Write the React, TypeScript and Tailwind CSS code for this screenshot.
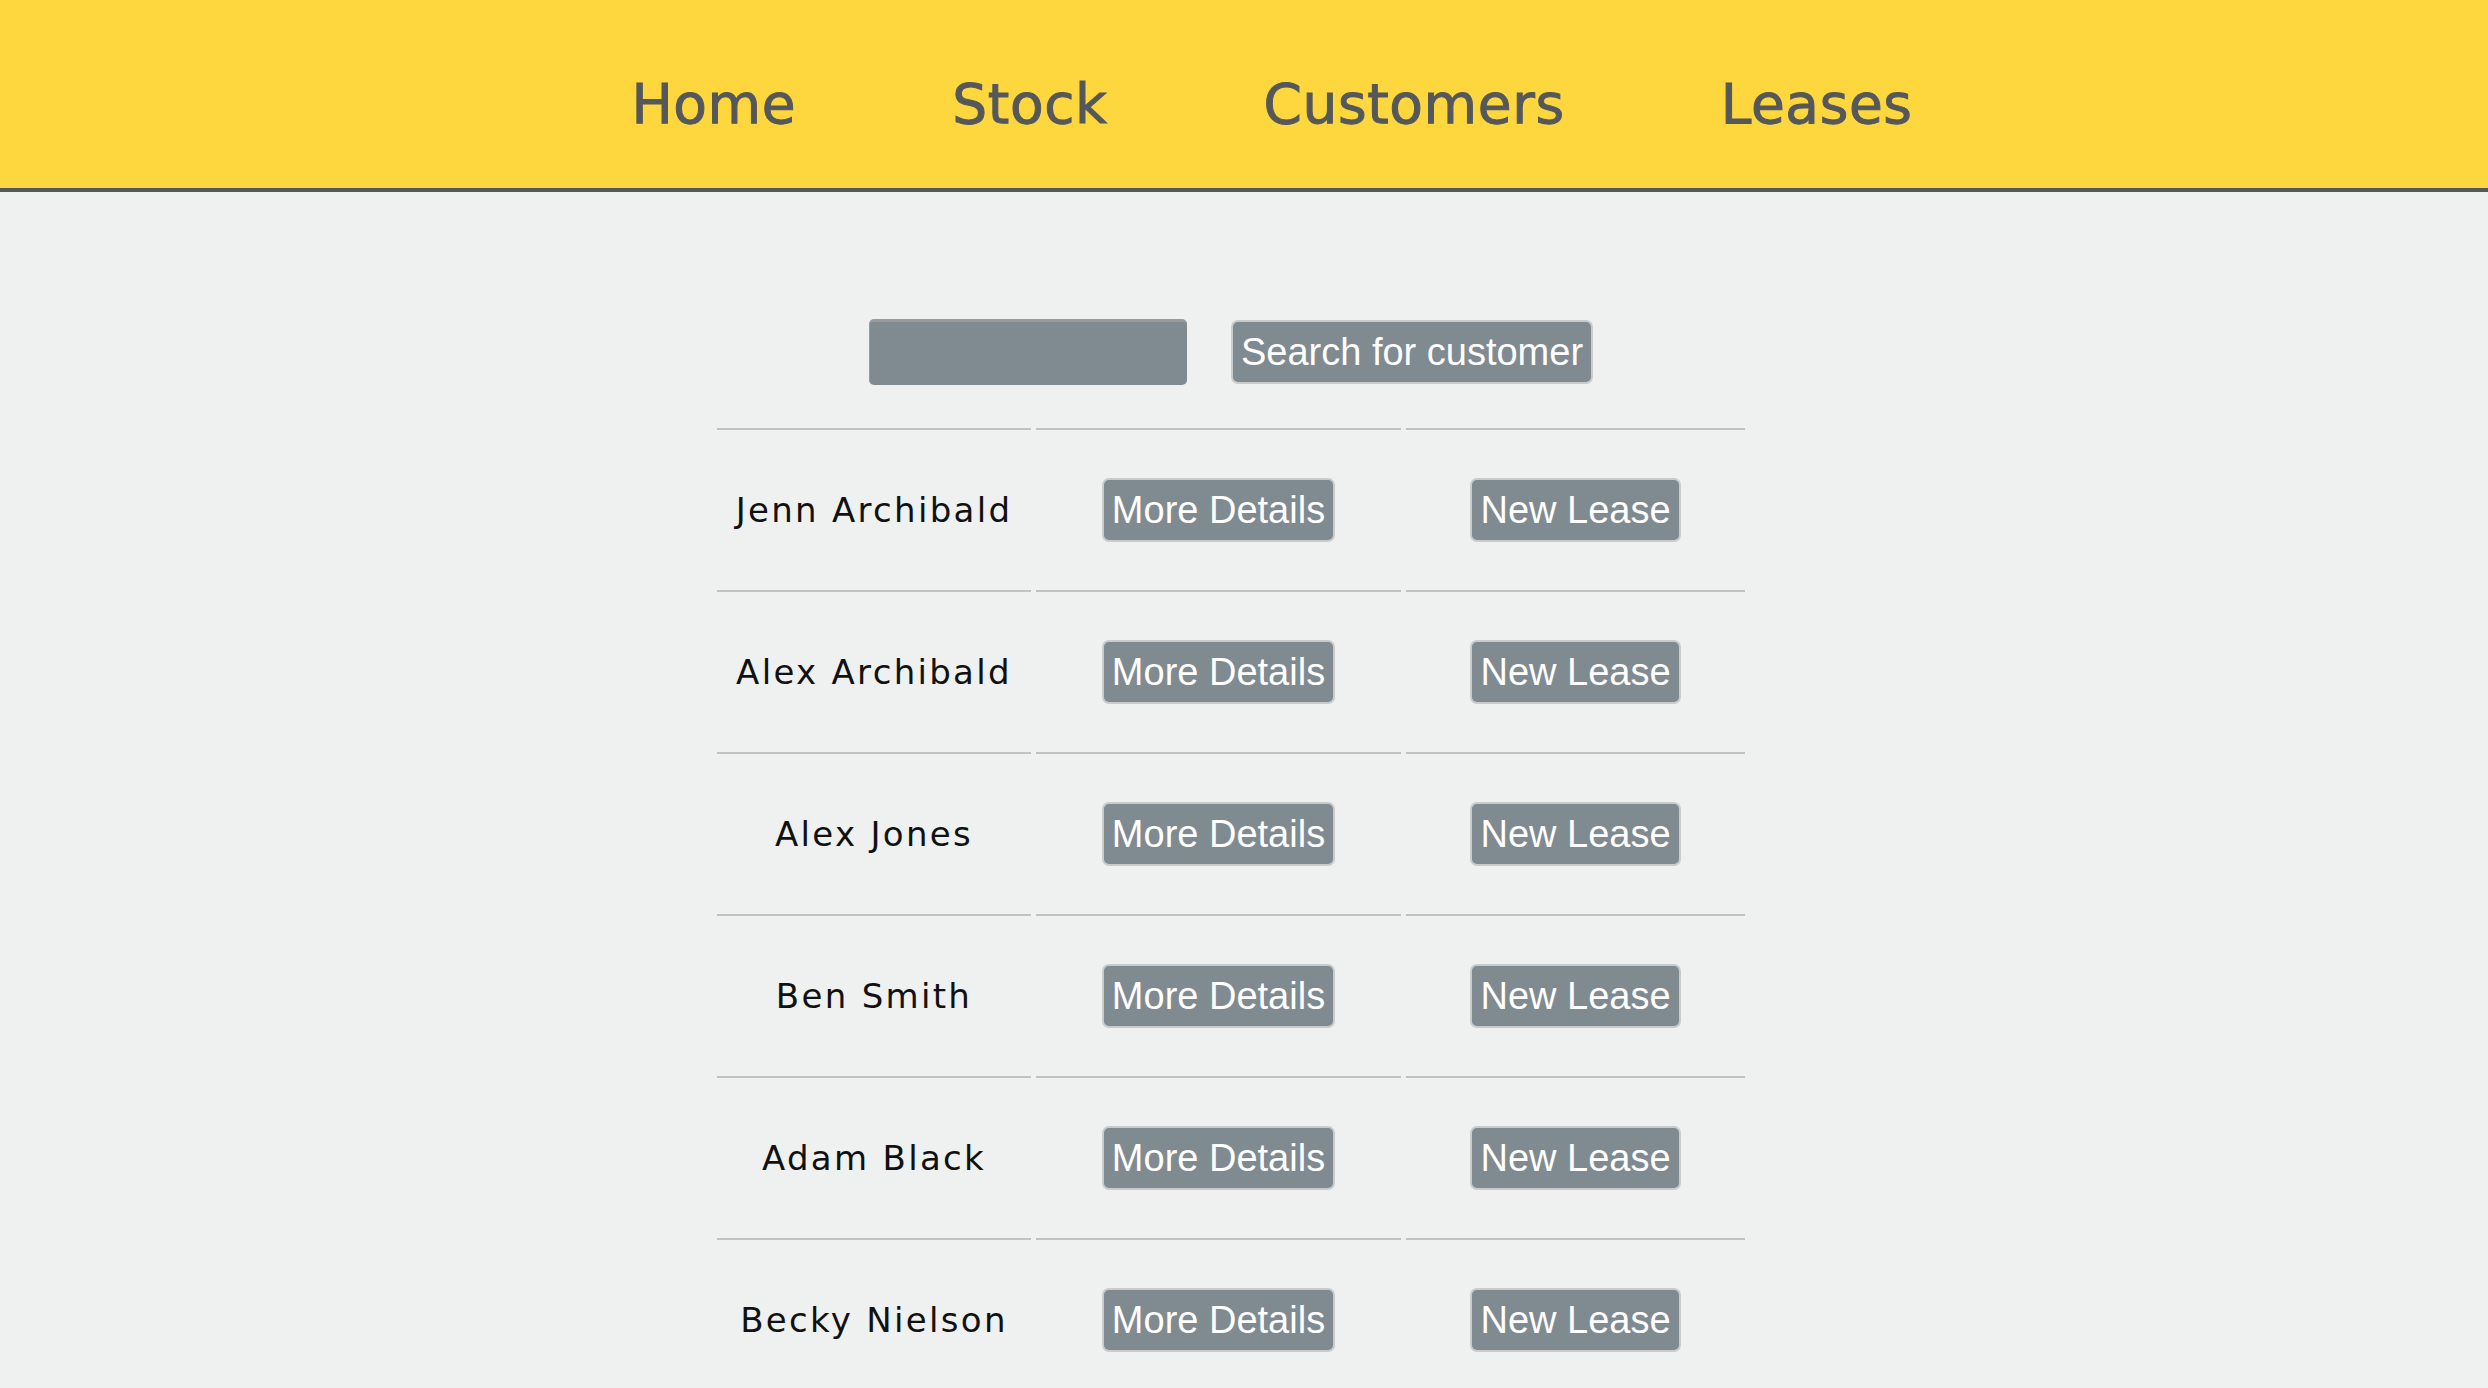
import React from "react";

const customers = [
  "Jenn Archibald",
  "Alex Archibald",
  "Alex Jones",
  "Ben Smith",
  "Adam Black",
  "Becky Nielson",
];

const navLinks = ["Home", "Stock", "Customers", "Leases"];

function GreyButton({ label }: { label: string }) {
  return (
    <button className="h-[64px] px-[8px] rounded-[7px] border-2 border-[#c9cccc] bg-[#7f8a91] text-white text-[38px] leading-none font-['Liberation_Sans',Arial,sans-serif]">
      {label}
    </button>
  );
}

export default function App() {
  return (
    <div className="min-h-screen bg-[#eff1f0] font-['DejaVu_Sans',sans-serif]">
      <header className="h-[192px] bg-[#fed63d] border-b-4 border-[#55585a] flex justify-center items-center pl-[56px] pt-[20px]">
        <nav className="flex gap-[156px]">
          {navLinks.map((link) => (
            <a
              key={link}
              href="#"
              className="text-[55px] tracking-[0.6px] text-[#55585a] leading-none [-webkit-text-stroke:1px_#55585a]"
            >
              {link}
            </a>
          ))}
        </nav>
      </header>

      <main className="flex flex-col items-center pr-[26px] pt-[127px]">
        <div className="flex items-center gap-[44px]">
          <input
            type="text"
            className="w-[318px] h-[66px] bg-[#7f8a91] rounded-[5px] border-t-[3px] border-l border-[#9a9a9a] outline-none"
          />
          <GreyButton label="Search for customer" />
        </div>

        <div className="mt-[43px] grid grid-cols-[314px_365px_339px] gap-x-[5px]">
          {customers.map((name) => (
            <React.Fragment key={name}>
              <div className="h-[162px] border-t-2 border-[#c0c2c2] flex items-center justify-center text-[34px] tracking-[2.3px] text-[#111]">
                {name}
              </div>
              <div className="h-[162px] border-t-2 border-[#c0c2c2] flex items-center justify-center">
                <GreyButton label="More Details" />
              </div>
              <div className="h-[162px] border-t-2 border-[#c0c2c2] flex items-center justify-center">
                <GreyButton label="New Lease" />
              </div>
            </React.Fragment>
          ))}
        </div>
      </main>
    </div>
  );
}
